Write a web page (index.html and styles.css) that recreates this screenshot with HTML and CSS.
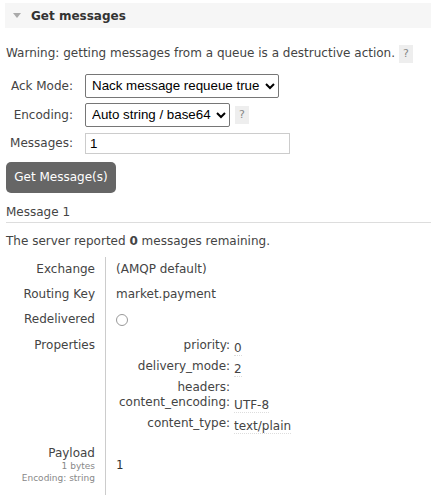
FILE: index.html
```html
<!DOCTYPE html>
<html>
<head>
<meta charset="utf-8">
<link rel="stylesheet" href="styles.css">
</head>
<body>
<div class="section">
  <h2 class="section-head"><span class="tri"></span>Get messages</h2>
  <div class="section-body">
    <p class="warning">Warning: getting messages from a queue is a destructive action. <span class="help">?</span></p>
    <div class="form">
      <label class="lbl">Ack Mode:</label>
      <div class="ctl">
        <select class="sel sel-ack">
          <option>Nack message requeue true</option>
        </select>
      </div>
      <label class="lbl">Encoding:</label>
      <div class="ctl">
        <select class="sel sel-enc">
          <option>Auto string / base64</option>
        </select>
        <span class="help">?</span>
      </div>
      <label class="lbl">Messages:</label>
      <div class="ctl">
        <input class="inp" type="text" value="1">
      </div>
    </div>
    <button class="btn">Get Message(s)</button>

    <h3 class="msg-title">Message 1</h3>
    <p class="remaining">The server reported <b>0</b> messages remaining.</p>

    <table class="facts">
      <tr><th>Exchange</th><td>(AMQP default)</td></tr>
      <tr><th>Routing Key</th><td>market.payment</td></tr>
      <tr class="redeliv"><th>Redelivered</th><td><span class="radio"></span></td></tr>
      <tr><th>Properties</th><td>
        <table class="props">
          <tr><th>priority:</th><td><span class="val">0</span></td></tr>
          <tr><th>delivery_mode:</th><td><span class="val">2</span></td></tr>
          <tr class="hdr"><th>headers:</th><td></td></tr>
          <tr><th>content_encoding:</th><td><span class="val">UTF-8</span></td></tr>
          <tr><th>content_type:</th><td><span class="val">text/plain</span></td></tr>
        </table>
      </td></tr>
      <tr class="payload"><th>Payload<sub>1 bytes</sub><sub>Encoding: string</sub></th><td><pre class="pre">1</pre></td></tr>
    </table>
  </div>
</div>
</body>
</html>
```
FILE: styles.css
```css
html, body {
  margin: 0;
  padding: 0;
  background: #fff;
}
body {
  font-family: "DejaVu Sans", Verdana, sans-serif;
  font-size: 12px;
  color: #444;
  padding: 3px 0 0 5px;
}
.section-head {
  display: flex;
  align-items: center;
  margin: 0;
  height: 25px;
  background: #f6f6f6;
  font-size: 12px;
  font-weight: bold;
  color: #333;
  padding-left: 8px;
}
.tri {
  width: 0;
  height: 0;
  border-left: 4.5px solid transparent;
  border-right: 4.5px solid transparent;
  border-top: 5px solid #aaa;
  margin-right: 10px;
}
.section-body {
  padding-left: 1px;
}
.warning {
  margin: 16px 0 0 0;
  line-height: 18px;
}
.help {
  display: inline-block;
  background: #eee;
  color: #888;
  font-size: 11px;
  width: 14px;
  height: 18px;
  line-height: 18px;
  text-align: center;
  vertical-align: middle;
}
.form {
  display: grid;
  grid-template-columns: 67px auto;
  column-gap: 12px;
  row-gap: 5px;
  margin-top: 11px;
  align-items: center;
  width: max-content;
}
.lbl {
  text-align: right;
}
.ctl {
  display: flex;
  align-items: center;
  gap: 5px;
}
.sel {
  font-family: "Liberation Sans", Arial, sans-serif;
  font-size: 13.33px;
  color: #000;
  height: 24px;
  border: 1px solid #767676;
  border-radius: 2px;
  background: #fff;
  padding: 0 2px;
}
.sel-ack { width: 194px; }
.sel-enc { width: 145px; }
.inp {
  font-family: "Liberation Sans", Arial, sans-serif;
  font-size: 13.33px;
  width: 205px;
  height: 21px;
  box-sizing: border-box;
  border: 1px solid #ccc;
  padding: 0 4px;
  margin-top: 1px;
  color: #000;
}
.btn {
  display: block;
  margin: 8px 0 0 0;
  background: #666;
  color: #fff;
  border: none;
  border-radius: 5px;
  font-family: "DejaVu Sans", Verdana, sans-serif;
  font-size: 12px;
  width: 110px;
  height: 31px;
  padding: 0;
}
.msg-title {
  margin: 12px 0 0 0;
  font-size: 12px;
  font-weight: normal;
  padding-bottom: 3px;
  border-bottom: 1px solid #ddd;
  line-height: 14px;
}
.remaining {
  margin: 11px 0 0 0;
  line-height: 14px;
}
.facts {
  border-collapse: collapse;
  margin-top: 9px;
}
.facts > tbody > tr > th {
  font-weight: normal;
  text-align: right;
  vertical-align: top;
  width: 89px;
  padding: 5px 10px 6px 0;
  line-height: 14px;
  color: #444;
}
.facts > tbody > tr > td {
  border-left: 1px solid #ccc;
  padding: 5px 0 6px 10px;
  vertical-align: top;
  line-height: 14px;
}
.facts > tbody > tr.redeliv > th,
.facts > tbody > tr.redeliv > td {
  padding-bottom: 7px;
}
.radio {
  display: inline-block;
  width: 10px;
  height: 10px;
  border: 1px solid #999;
  border-radius: 50%;
  vertical-align: -3px;
}
.props {
  border-collapse: collapse;
  margin-left: 3px;
}
.props th {
  font-weight: normal;
  text-align: right;
  padding: 0 4px 3px 0;
  line-height: 14px;
  vertical-align: top;
}
.props td {
  padding: 0 0 3px 0;
  vertical-align: top;
  line-height: 14px;
}
.props tr.hdr th, .props tr.hdr td {
  padding-bottom: 1px;
}
.val {
  display: inline-block;
  padding-top: 3px;
  border-bottom: 1px dotted #ddd;
}
.payload th {
  padding-top: 3px !important;
  padding-bottom: 0 !important;
}
.payload sub {
  display: block;
  font-size: 9px;
  color: #888;
  line-height: 12px;
  vertical-align: baseline;
}
.payload td {
  padding-top: 15px !important;
  padding-bottom: 30px !important;
}
.pre {
  margin: 0;
  font-family: "DejaVu Sans Mono", monospace;
  font-size: 12px;
  color: #333;
}
```
